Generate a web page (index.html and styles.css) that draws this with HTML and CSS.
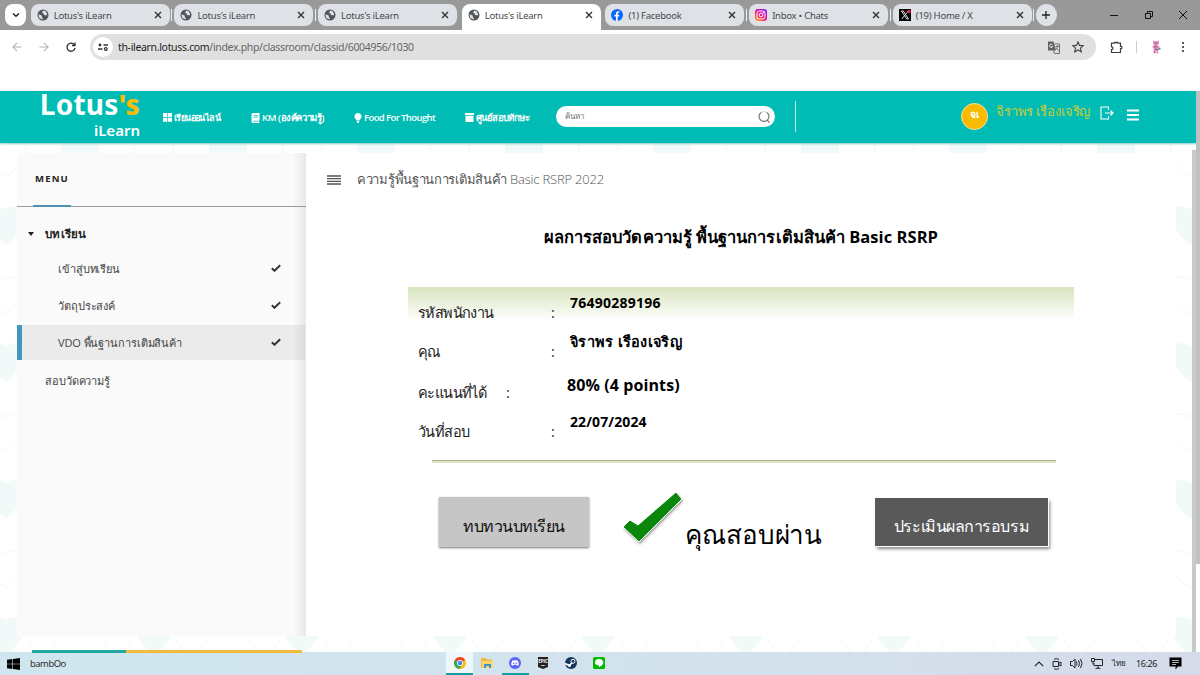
FILE: index.html
```html
<!DOCTYPE html>
<html lang="th">
<head>
    <meta charset="UTF-8">
    <meta name="viewport" content="width=device-width, initial-scale=1.0">
    <title>Lotus's iLearn</title>
    <link rel="stylesheet" href="styles.css">
</head>
<body>
    <svg class="defs" width="0" height="0">
        <symbol id="globe" viewBox="0 0 12 12">
            <circle cx="6" cy="6" r="5.5" fill="#51565b"/>
            <path d="M1.6 5.2 4.7 6.4 5 8.5 6.4 10.2 4.2 10 2 8.4zM6.4 1.5 5 3.3 6.6 4.7 7.2 6.1 9.4 6.6 10.2 5 8.6 2.2z" fill="#dee1e6"/>
        </symbol>
        <symbol id="close" viewBox="0 0 8 8">
            <path d="M1 1l6 6M7 1l-6 6" stroke="#303134" stroke-width="1.4"/>
        </symbol>
        <symbol id="check" viewBox="0 0 10 8">
            <path d="M.8 4.2 3.5 6.8 9.2 1.2" fill="none" stroke="#333" stroke-width="1.9"/>
        </symbol>
    </svg>

    <!-- Tab strip -->
    <div class="tabs">
        <div class="tab-search"><svg width="8" height="6" viewBox="0 0 8 6"><path d="M1 1.5 4 4.300 7 1.500" fill="none" stroke="#222" stroke-width="1.4"/></svg></div>
        <div class="tab"><svg class="fav"><use href="#globe"/></svg><span>Lotus's iLearn</span><svg class="x"><use href="#close"/></svg></div>
        <div class="tab sep"><svg class="fav"><use href="#globe"/></svg><span>Lotus's iLearn</span><svg class="x"><use href="#close"/></svg></div>
        <div class="tab sep"><svg class="fav"><use href="#globe"/></svg><span>Lotus's iLearn</span><svg class="x"><use href="#close"/></svg></div>
        <div class="tab active"><svg class="fav"><use href="#globe"/></svg><span>Lotus's iLearn</span><svg class="x"><use href="#close"/></svg></div>
        <div class="tab">
            <svg class="fav" viewBox="0 0 12 12"><circle cx="6" cy="6" r="6" fill="#0866ff"/><path d="M5 12V7.6H3.5V5.8H5V4.6C5 3 5.9 2.2 7.3 2.2h1v1.6h-.8c-.6 0-.8.3-.8.9v1.1h1.6l-.3 1.8H6.7V12z" fill="#fff"/></svg>
            <span>(1) Facebook</span><svg class="x"><use href="#close"/></svg>
        </div>
        <div class="tab sep">
            <svg class="fav" viewBox="0 0 12 12">
                <defs><linearGradient id="ig" x1="0" y1="1" x2=".8" y2="0"><stop offset="0" stop-color="#ffc52e"/><stop offset=".35" stop-color="#fd3a52"/><stop offset=".65" stop-color="#e302a7"/><stop offset="1" stop-color="#8a1cff"/></linearGradient></defs>
                <rect width="12" height="12" rx="3" fill="url(#ig)"/>
                <rect x="2" y="2" width="8" height="8" rx="2.3" fill="none" stroke="#fff"/><circle cx="6" cy="6" r="1.9" fill="none" stroke="#fff"/><circle cx="8.3" cy="3.7" r=".6" fill="#fff"/>
            </svg>
            <span>Inbox • Chats</span><svg class="x"><use href="#close"/></svg>
        </div>
        <div class="tab sep">
            <svg class="fav" viewBox="0 0 12 12"><rect width="12" height="12" fill="#000"/><path d="M2.5 2h1.8l5.2 8H7.7zM9.3 2 2.8 10" fill="none" stroke="#ddd" stroke-width="1"/><circle cx="10" cy="2.5" r="1.8" fill="#e0245e"/></svg>
            <span>(19) Home / X</span><svg class="x"><use href="#close"/></svg>
        </div>
        <div class="new-tab sep"><svg width="8" height="8" viewBox="0 0 8 8"><path d="M4 0v8M0 4h8" stroke="#222" stroke-width="1.3"/></svg></div>
        <div class="window-buttons">
            <svg width="8" height="8" viewBox="0 0 8 8"><path d="M0 4.5h8" stroke="#111"/></svg>
            <svg width="8" height="8" viewBox="0 0 8 8"><path d="M.5 2.5h5v5h-5zM2.5 2.5V.5h5v5h-2" fill="none" stroke="#111"/></svg>
            <svg width="8" height="8" viewBox="0 0 8 8"><path d="M0 0l8 8M8 0L0 8" stroke="#111"/></svg>
        </div>
    </div>

    <!-- Address bar -->
    <div class="toolbar">
        <div class="nav-buttons">
            <svg width="10" height="10" viewBox="0 0 10 10"><path d="M9.5 5H1M5 .9.9 5 5 9.1" fill="none" stroke="#b5b5b5" stroke-width="1.1"/></svg>
            <svg width="10" height="10" viewBox="0 0 10 10"><path d="M.5 5H9M5 .9 9.1 5 5 9.1" fill="none" stroke="#b5b5b5" stroke-width="1.1"/></svg>
            <svg width="10" height="10" viewBox="0 0 10 10"><path d="M8.5 3.2A4 4 0 1 0 9 5.8M9 .6v3H6" fill="none" stroke="#333" stroke-width="1.3"/></svg>
        </div>
        <div class="url-bar">
            <div class="site-info"><svg width="10" height="8" viewBox="0 0 10 8"><path d="M5.5 2H10M0 6h4.5" stroke="#333" stroke-width="1.3"/><circle cx="2" cy="2" r="1.4" fill="#333"/><circle cx="7.8" cy="6" r="1.4" fill="none" stroke="#333" stroke-width="1.2"/></svg></div>
            <div class="url"><b>th-ilearn.lotuss.com</b>/index.php/classroom/classid/6004956/1030</div>
            <svg class="translate" width="13" height="13" viewBox="0 0 13 13"><path d="M1 .5h5.5L9 9.5H1z" fill="#5f6368"/><path d="M7.5 3h5v9.5h-5L6.3 9.7M8.5 5.5H12M10.3 4.5v1c-.2 1.700-1 2.500-1.800 3.200M9 6.800l2.700 3" fill="none" stroke="#5f6368" stroke-width=".9"/><path d="M5.6 3.8a1.7 1.7 0 1 0 .2 1.7H4.300" fill="none" stroke="#eee" stroke-width=".9"/></svg>
            <svg width="12" height="12" viewBox="0 0 12 12"><path d="M6 1l1.5 3.4 3.7.4-2.8 2.4.9 3.7L6 9l-3.3 1.900.9-3.700L.8 4.800l3.700-.4z" fill="none" stroke="#3c4043" stroke-width="1.1"/></svg>
        </div>
        <svg class="extension" width="13" height="13" viewBox="0 0 13 13"><path d="M1.500 2.200h3.300V1.300h2.600v.9h3.100v3.300h1.300v2h-1.300v4h-9V8.600c2 0 2-2.800 0-2.800z" fill="none" stroke="#3c4043" stroke-width="1.2"/></svg>
        <div class="toolbar-line"></div>
        <svg class="profile" width="10" height="14" viewBox="0 0 10 14"><path d="M2 .5 4 1.300h2L8 .5v3L6.800 5l1.700 2-1.700 1.500.7 5H5.600L5 10l-.8 3.500H2.300l.4-5L1 7l2-2L2 3.500z" fill="#e58dbb"/><path d="M3.500 3h3M3 6.800h3M4 9.500h3M3 12h1.500" stroke="#8e3d80" stroke-width=".8"/><circle cx="8.300" cy="8.700" r="1.300" fill="#6c91b8"/></svg>
        <svg class="more" width="4" height="12" viewBox="0 0 4 12"><g fill="#333"><circle cx="2" cy="2" r="1.1"/><circle cx="2" cy="6" r="1.1"/><circle cx="2" cy="10" r="1.1"/></g></svg>
    </div>

    <!-- Site header -->
    <header class="site-header">
        <div class="logo"><div class="logo-main">Lotus<i>'s</i></div><div class="logo-sub">iLearn</div></div>
        <nav>
            <a class="nav-online"><svg width="9" height="9" viewBox="0 0 9 9"><path d="M0 0h4.200v4H0zM4.800 0H9v4H4.800zM0 4.700h4.200v4H0zM4.800 4.700H9v4H4.800z" fill="#fff"/></svg><span>เรียนออนไลน์</span></a>
            <a class="nav-km"><svg width="9" height="10" viewBox="0 0 9 10"><path d="M2 0h6.500v7.500H8V9h.5v1H2Q.5 10 .5 8.500v-7Q.5 0 2 0z" fill="#fff"/><path d="M2.500 2.500h4.500M2.500 4.200h4.500M2 8.200h5.500" stroke="#00bcb4" stroke-width=".7"/></svg><span>KM (องค์ความรู้)</span></a>
            <a class="nav-food"><svg width="8" height="10" viewBox="0 0 8 10"><path d="M4 0a3.500 3.500 0 0 1 2.200 6.200L5.500 7.500h-3L1.800 6.200A3.500 3.500 0 0 1 4 0zM2.500 8h3L4.700 10H3.300z" fill="#fff"/></svg><span>Food For Thought</span></a>
            <a class="nav-test"><svg width="9" height="9" viewBox="0 0 9 9"><path d="M0 0h9v2.300H0zM.5 2.900h8V9h-8z" fill="#fff"/></svg><span>ศูนย์สอบทักษะ</span></a>
        </nav>
        <div class="search"><span>ค้นหา</span><svg width="12" height="12" viewBox="0 0 12 12"><path d="M3.500 1.300a4.900 4.900 0 1 0 5 0M9.200 9.200 11.500 11.500" fill="none" stroke="#777" stroke-width="1.200"/><path d="M3.500 1.300a5 5 0 0 1 5 0" fill="none" stroke="#ddd"/></svg></div>
        <div class="header-line"></div>
        <div class="avatar">จเ</div>
        <div class="user-name"><span>จิราพร เรืองเจริญ</span></div>
        <svg class="logout" width="14" height="14" viewBox="0 0 14 14"><path d="M8.500 4V1H1v12h7.500v-3M5 7h8M10.500 4.500 13 7l-2.500 2.500" fill="none" stroke="#fff" stroke-width="1.1"/></svg>
        <svg class="burger" width="12" height="12" viewBox="0 0 12 12"><path d="M0 1.500h12M0 6h12M0 10.500h12" stroke="#fff" stroke-width="2"/></svg>
    </header>

    <!-- Lesson page -->
    <div class="page">
        <svg class="pattern" width="1192" height="509">
            <defs>
                <pattern id="hearts" width="148" height="137" patternUnits="userSpaceOnUse" patternTransform="translate(6 -54)">
                    <path d="M74 88C61 76 55 68 55 59c0-10 10-13 19-7 9-6 19-3 19 7 0 9-6 17-19 29z" fill="#f2faf9"/>
                    <path d="M148 156c-13-12-19-20-19-29 0-10 10-13 19-7M0 156c13-12 19-20 19-29 0-10-10-13-19-7" fill="#f2faf9"/>
                    <path d="M148 19c-13-12-19-20-19-29M0 19C13 7 19-1 19-10H0zM148 19V-10h-19" fill="#f2faf9"/>
                    <path d="M148 88c-13-10-20-17-20-25 0-12 10-15 20-9M0 88c13-10 20-17 20-25 0-12-10-15-20-9M37 125C20 106 18 90 37 95c19-5 17 11 0 30zM111 125C94 106 92 90 111 95c19-5 17 11 0 30zM37 24 22 3M37 24 52 3M111 24 96 3M111 24 126 3" fill="none" stroke="#eff8f8"/>
                </pattern>
            </defs>
            <rect width="1192" height="509" fill="url(#hearts)"/>
        </svg>
        <div class="course">
            <aside class="sidebar">
                <div class="menu-title">MENU</div>
                <div class="chapter"><svg width="6" height="4" viewBox="0 0 6 4"><path d="M0 0h6L3 4z" fill="#222"/></svg><span>บทเรียน</span></div>
                <div class="lesson"><span>เข้าสู่บทเรียน</span><svg class="check"><use href="#check"/></svg></div>
                <div class="lesson"><span>วัตถุประสงค์</span><svg class="check"><use href="#check"/></svg></div>
                <div class="lesson selected"><span>VDO พื้นฐานการเติมสินค้า</span><svg class="check"><use href="#check"/></svg></div>
                <div class="lesson exam"><span>สอบวัดความรู้</span></div>
            </aside>
            <main class="content">
                <div class="course-head">
                    <svg width="14" height="10" viewBox="0 0 14 10"><path d="M0 1h14M0 3.700h14M0 6.300h14M0 9h14" stroke="#555" stroke-width="1.300"/></svg>
                    <span>ความรู้พื้นฐานการเติมสินค้า <em>Basic RSRP 2022</em></span>
                </div>
                <h1><span>ผลการสอบวัดความรู้ พื้นฐานการเติมสินค้า Basic RSRP</span></h1>
                <div class="result">
                    <div class="row"><span>รหัสพนักงาน</span><span class="colon">:</span><strong class="code">76490289196</strong></div>
                    <div class="row"><span>คุณ</span><span class="colon">:</span><strong class="name">จิราพร เรืองเจริญ</strong></div>
                    <div class="row score"><span>คะแนนที่ได้</span><span class="colon">:</span><strong>80% (4 points)</strong></div>
                    <div class="row"><span>วันที่สอบ</span><span class="colon">:</span><strong>22/07/2024</strong></div>
                </div>
                <div class="divider"></div>
                <div class="actions">
                    <div class="btn review"><span>ทบทวนบทเรียน</span></div>
                    <svg class="pass-mark" width="64" height="58" viewBox="0 0 64 58"><path d="M1 37 8 30l8 5L54 2l6 7-43 43z" fill="#0a870a" stroke="#fff"/></svg>
                    <div class="pass"><span>คุณสอบผ่าน</span></div>
                    <div class="btn evaluate"><span>ประเมินผลการอบรม</span></div>
                </div>
            </main>
        </div>
        <div class="footer-line"></div>
        <div class="frame-scroll"></div>
        <div class="page-scroll"></div>
    </div>

    <!-- Windows taskbar -->
    <div class="taskbar">
        <svg class="start" width="13" height="12" viewBox="0 0 13 12"><path d="M0 1.700 5.400 1v4.700H0zM6 .9 13 0v5.700H6zM0 6.300h5.400V11L0 10.300zM6 6.300h7V12l-7-.9z" fill="#000"/></svg>
        <span class="desk-name">bambOo</span>
        <div class="apps">
            <div class="app current"><svg viewBox="0 0 12 12"><circle cx="6" cy="6" r="6" fill="#fbbc04"/><path d="M6 6 .8 3A6 6 0 0 1 11.200 3z" fill="#ea4335"/><path d="M6 6 .8 3A6 6 0 0 0 5.500 12L8 7z" fill="#34a853"/><circle cx="6" cy="6" r="2.900" fill="#fff"/><circle cx="6" cy="6" r="2.200" fill="#4285f4"/></svg></div>
            <div class="app"><svg viewBox="0 0 12 12"><path d="M0 1h5l1 1.500h5V11H0z" fill="#efb840"/><path d="M1 4h11v7H1z" fill="#ffd86b"/><path d="M3 11V7h7v4H8V9H5v2z" fill="#3d94c9"/></svg></div>
            <div class="app open"><svg viewBox="0 0 12 12"><circle cx="6" cy="6" r="6" fill="#5865f2"/><path d="M3.300 3.600Q6 2.700 8.700 3.600 10 6 9.700 8l-1.600.8-.7-1H4.600l-.7 1L2.300 8Q2 6 3.300 3.600z" fill="#fff"/><circle cx="4.700" cy="6.200" r=".8" fill="#5865f2"/><circle cx="7.300" cy="6.200" r=".8" fill="#5865f2"/></svg></div>
            <div class="app"><svg viewBox="0 0 12 12"><path d="M1 0h10v10l-5 2-5-2z" fill="#222"/><text x="6" y="5.500" font-size="4.500" font-weight="700" text-anchor="middle" fill="#fff">EPIC</text><path d="M3 8h6L6 9.300z" fill="#ccc"/></svg></div>
            <div class="app"><svg viewBox="0 0 12 12"><circle cx="6" cy="6" r="6" fill="#15355c"/><path d="M0 6.500 4.500 8.500 8 4.500" fill="none" stroke="#fff" stroke-width="1.600"/><circle cx="8" cy="4.300" r="2" fill="#15355c" stroke="#fff"/><circle cx="4.500" cy="8.600" r="1.500" fill="#fff"/></svg></div>
            <div class="app"><svg viewBox="0 0 12 12"><rect width="12" height="12" rx="1.500" fill="#00b900"/><path d="M6 2c5 0 5.500 5 2.500 6.500L6 10.300V8.600C.5 8.500.7 2 6 2z" fill="#fff"/></svg></div>
        </div>
        <div class="tray">
            <svg width="10" height="6" viewBox="0 0 10 6"><path d="M.8 5.200 5 1l4.200 4.200" fill="none" stroke="#222" stroke-width="1.100"/></svg>
            <svg width="10" height="12" viewBox="0 0 10 12"><path d="M1 3.500h5.500v5H1zM6.500 5.500 9 4v4L6.500 6.500M2 1.300Q4.500 0 7 1.300M2 10.700Q4.500 12 7 10.700" fill="none" stroke="#222"/></svg>
            <svg width="13" height="11" viewBox="0 0 13 11"><path d="M.5 3.500h2L5 1v9L2.500 7.500h-2zM6.500 3.500q1 2 0 4M8.500 2.200q2 3.300 0 6.600M10.500 1q3 4.500 0 9" fill="none" stroke="#222"/></svg>
            <svg width="12" height="11" viewBox="0 0 12 11"><path d="M4 1.500h7.500v6H3V5M7 7.500v2.700M4.500 10.300h5M.5.500h3v3h-3zM2 3.500v3" fill="none" stroke="#222"/></svg>
            <span class="lang">ไทย</span>
            <span class="clock">16:26</span>
            <svg width="13" height="13" viewBox="0 0 13 13"><path d="M.5.500h12v9H9l-2.500 3v-3h-6z" fill="#000"/><path d="M3 3.500h7M3 5.500h7M3 7.500h4" stroke="#ddd" stroke-width=".8"/></svg>
        </div>
    </div>
</body>
</html>
```
FILE: styles.css
```css
* {
    box-sizing: border-box;
}
body {
    margin: 0;
    width: 1200px;
    height: 675px;
    overflow: hidden;
    background: #fff;
    font-family: "Open Sans", "Noto Sans", sans-serif;
    color: #222;
}
svg {
    display: block;
    flex: none;
}
span,
strong {
    white-space: nowrap;
}
.defs {
    position: absolute;
}

/* browser */
.tabs {
    display: flex;
    height: 30px;
    padding: 4px 0 0 5px;
    background: #999;
}
.tab-search,
.new-tab {
    display: flex;
    align-items: center;
    justify-content: center;
    width: 21px;
    height: 22px;
    border-radius: 8px;
    background: #fff;
}
.tab {
    position: relative;
    display: flex;
    align-items: center;
    width: 139px;
    height: 22px;
    margin-left: 4.7px;
    padding: 0 8px 0 6px;
    border-radius: 8px;
    background: #dee1e6;
    font: 9.5px "Noto Sans", sans-serif;
    letter-spacing: -0.25px;
    color: #45484c;
}
.tab.active {
    height: 26px;
    padding-bottom: 4px;
    border-radius: 8px 8px 0 0;
    background: #fff;
}
.sep::before {
    content: "";
    position: absolute;
    left: -3px;
    top: 5px;
    width: 1px;
    height: 12px;
    background: #eee;
}
.fav {
    width: 12px;
    height: 12px;
    margin-right: 5px;
}
.x {
    width: 8px;
    height: 8px;
    margin-left: auto;
}
.new-tab {
    position: relative;
    margin-left: 4px;
    border-radius: 50%;
    background: #dee1e6;
}
.window-buttons {
    display: flex;
    gap: 26.5px;
    margin: 7px 13px 0 auto;
}
.toolbar {
    display: flex;
    align-items: center;
    height: 61px;
    padding: 0 15px 27px 12px;
}
.nav-buttons {
    display: flex;
    gap: 17px;
    width: 78px;
}
.url-bar {
    display: flex;
    align-items: center;
    width: 1006px;
    height: 26px;
    padding: 0 12px 0 3px;
    border-radius: 13px;
    background: #e0e0e0;
}
.site-info {
    display: flex;
    align-items: center;
    justify-content: center;
    width: 20px;
    height: 20px;
    border-radius: 50%;
    background: #fff;
}
.url {
    margin-left: 5px;
    font: 10.5px "Noto Sans", sans-serif;
    letter-spacing: -0.33px;
    color: #666;
}
.url b {
    font-weight: 400;
    color: #222;
}
.translate {
    margin: 0 12px 0 auto;
}
.extension {
    margin-left: 14px;
}
.toolbar-line {
    width: 1px;
    height: 12px;
    margin-left: 13px;
    background: #ccc;
}
.profile {
    margin-left: 14px;
}
.more {
    margin-left: auto;
}

/* site header */
.site-header {
    display: flex;
    position: relative;
    z-index: 2;
    width: 1196px;
    height: 52px;
    background: #00bcb4;
    box-shadow: 0 1px 2px #88c9c6;
    color: #fff;
}
.logo {
    width: 140px;
    text-align: right;
    font-family: "Noto Sans", sans-serif;
    font-weight: 700;
}
.logo-main {
    height: 27px;
    margin-left: -10px;
    font-size: 28px;
    line-height: 26px;
    letter-spacing: 0.2px;
}
.logo-main i {
    font-style: normal;
    font-weight: 800;
    color: #f8bd08;
}
.logo-sub {
    margin-top: 2px;
    font-size: 15px;
    font-weight: 600;
    line-height: 20px;
}
nav {
    display: flex;
    width: 416px;
    padding-left: 23px;
}
nav a {
    display: flex;
    align-items: center;
    gap: 2px;
    height: 53px;
    font-size: 9.5px;
    font-weight: 600;
}
nav span {
    letter-spacing: -0.6px;
}
.nav-online {
    width: 88px;
}
.nav-online span {
    font-size: 9px;
}
.nav-km {
    width: 103px;
}
.nav-km span {
    letter-spacing: -0.4px;
}
.nav-food {
    width: 111px;
}
.search {
    display: flex;
    align-items: center;
    justify-content: space-between;
    width: 219px;
    height: 21px;
    margin-top: 15px;
    padding: 0 5px 0 9px;
    border-radius: 11px;
    background: #fff;
    font-size: 8px;
    color: #777;
}
.header-line {
    width: 1px;
    height: 31px;
    margin: 10px 165px 0 20px;
    background: #bdebe8;
}
.avatar {
    width: 27px;
    height: 27px;
    margin-top: 12px;
    border: 1px solid #f7e49b;
    border-radius: 50%;
    background: #fbb900;
    font-size: 10.5px;
    font-weight: 600;
    line-height: 20px;
    text-align: center;
}
.user-name {
    width: 104px;
    padding: 10px 0 0 8px;
    font-size: 13px;
    line-height: 20px;
    letter-spacing: -0.15px;
    color: #c9ce35;
}
.logout {
    margin: 15px 0 0 8px;
}
.burger {
    margin: 18px 0 0 13px;
}

/* page */
.page {
    position: relative;
    height: 509px;
}
.pattern {
    position: absolute;
    left: 0;
    top: 0;
}
.course {
    position: relative;
    display: flex;
    width: 1159px;
    height: 493px;
    margin-left: 17px;
    padding-top: 10px;
}
.sidebar {
    width: 289px;
    height: 483px;
    background: linear-gradient(to right, transparent 276px, #e7e7e7) #fafafa;
}
.menu-title {
    position: relative;
    height: 54px;
    padding: 18px 0 0 18px;
    border-bottom: 1px solid #999;
    font-size: 9.5px;
    font-weight: 700;
    line-height: 16px;
    letter-spacing: 1.2px;
}
.menu-title::after {
    content: "";
    position: absolute;
    left: 16px;
    bottom: -1px;
    width: 38px;
    height: 2px;
    background: #4b8fb3;
}
.chapter {
    display: flex;
    align-items: center;
    gap: 11px;
    height: 53px;
    padding-left: 11px;
    font-size: 11.5px;
    font-weight: 600;
    letter-spacing: 0.3px;
}
.lesson {
    display: flex;
    align-items: center;
    justify-content: space-between;
    height: 37px;
    padding: 0 25px 0 41px;
    font-size: 11px;
    letter-spacing: -0.1px;
    color: #444;
}
.chapter + .lesson {
    margin-top: -10px;
}
.lesson.selected {
    height: 35px;
    margin: 1px 1px 1px 0;
    padding-left: 36px;
    padding-right: 24px;
    border-left: 5px solid #4594be;
    background: rgba(0, 0, 0, .06);
}
.lesson.exam {
    height: 39px;
    padding-left: 28px;
}
.check {
    width: 10px;
    height: 8px;
}
.lesson .check {
    margin-top: -2px;
}
.content {
    width: 870px;
    background: #fff;
}
.course-head {
    display: flex;
    align-items: center;
    gap: 16px;
    height: 53px;
    padding-left: 21px;
    font-size: 13px;
    color: #555;
}
.course-head em {
    font-style: normal;
    font-weight: 350;
    letter-spacing: -0.2px;
}
.course-head span {
    letter-spacing: -0.3px;
}
h1 {
    height: 81px;
    margin: 0;
    padding-top: 18px;
    text-align: center;
    font-size: 16.5px;
    font-weight: 700;
    line-height: 26px;
    letter-spacing: 0.05px;
    color: #000;
}
.result {
    width: 666px;
    height: 173px;
    margin-left: 102px;
    background: linear-gradient(#d8e4bd, #fff 34px) no-repeat;
    font-size: 14.5px;
    font-weight: 300;
    letter-spacing: -0.6px;
}
.row {
    display: grid;
    grid-template-columns: 133px 19px auto;
    height: 39px;
    padding: 12px 0 0 10px;
    line-height: 28px;
}
.row strong {
    margin-top: -10px;
    font-size: 14px;
    font-weight: 700;
    letter-spacing: 0.1px;
    color: #000;
}
.row .code {
    letter-spacing: 0.25px;
}
.row .name {
    font-size: 14.5px;
    letter-spacing: 0.3px;
}
.row.score {
    grid-template-columns: 88px 61px auto;
    height: 41px;
    padding-top: 14px;
}
.row.score strong {
    font-size: 16px;
    margin-top: -8px;
}
.colon {
    font-weight: 400;
}
.divider {
    width: 624px;
    height: 3px;
    margin-left: 126px;
    border-top: 1px solid #a9b886;
    background: #dbe5c6;
}
.actions {
    display: flex;
    padding: 34px 0 0 133px;
}
.btn {
    display: flex;
    justify-content: center;
    font-size: 16px;
    line-height: 28px;
    letter-spacing: -0.45px;
}
.review {
    width: 150px;
    height: 50px;
    padding-top: 15px;
    background: #c6c6c6;
    box-shadow: 0 1px 2px #777;
    font-weight: 300;
    color: #111;
}
.pass-mark {
    margin: -7px 0 0 33px;
    filter: drop-shadow(1px 2px 1px #aaa);
}
.pass {
    width: 189px;
    margin-left: -1px;
    margin-right: 1px;
    font-size: 26px;
    font-weight: 300;
    line-height: 75px;
    letter-spacing: -0.1px;
    color: #000;
}
.evaluate {
    width: 173px;
    height: 48px;
    margin-top: 1px;
    padding-top: 14px;
    background: #595959;
    box-shadow: 1px 1px #fff, 2px 3px 3px #888;
    color: #fff;
}
.footer-line {
    position: absolute;
    left: 32px;
    bottom: -1px;
    width: 270px;
    height: 3px;
    background: linear-gradient(to right, #21aaa4 94px, #f3bb3c 94px);
}
.frame-scroll {
    position: absolute;
    right: 4px;
    top: 7px;
    width: 4px;
    height: 502px;
    background: #c9c9c9;
}
.page-scroll {
    position: absolute;
    z-index: 3;
    right: 0;
    top: -52px;
    width: 4px;
    height: 473px;
    background: #c0c0c0;
}

/* taskbar */
.taskbar {
    display: flex;
    align-items: center;
    height: 23px;
    padding-left: 7px;
    background: linear-gradient(to right, #d0e6ee, #d2e3ed 50%, #d5dbea);
    font: 9.5px "Open Sans", sans-serif;
}
.desk-name {
    width: 416px;
    margin-left: 10px;
    letter-spacing: -0.5px;
}
.apps {
    display: flex;
    gap: 0.5px;
}
.app {
    display: flex;
    align-items: center;
    justify-content: center;
    width: 27.3px;
    height: 23px;
    border-bottom: 2px solid transparent;
}
.app svg {
    width: 12px;
    height: 12px;
}
.app.current {
    background: #f0f7fa;
    border-color: #159fa0;
}
.app.open {
    border-color: #159fa0;
}
.tray {
    display: flex;
    align-items: center;
    gap: 8px;
    margin: 0 18px 0 auto;
    font: 9px "Noto Sans", sans-serif;
}
.tray .lang {
    width: 16px;
    margin-left: 1px;
    font-size: 8px;
}
.clock {
    margin: 0 4px 0 0;
    letter-spacing: -0.4px;
}
```
